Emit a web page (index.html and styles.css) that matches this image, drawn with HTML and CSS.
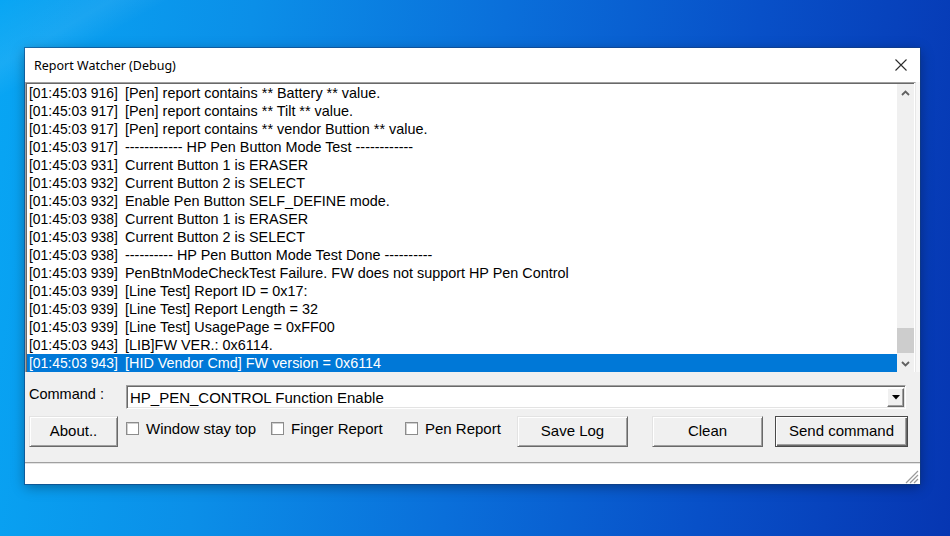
FILE: index.html
```html
<!DOCTYPE html>
<html>
<head>
<meta charset="utf-8">
<link rel="stylesheet" href="styles.css">
</head>
<body>
<div class="desktop">
  <div class="window">
    <div class="titlebar">
      <span class="title">Report Watcher (Debug)</span>
      <svg class="close" width="12" height="12" viewBox="0 0 12 12"><path d="M0.5 0.5 L11.5 11.5 M11.5 0.5 L0.5 11.5" stroke="#2b2b2b" stroke-width="1.1" fill="none"/></svg>
    </div>
    <div class="listwrap">
      <div class="listbox">
        <div class="rows">
          <div class="row"><span class="ts">[01:45:03 916]</span>[Pen] report contains ** Battery ** value.</div>
          <div class="row"><span class="ts">[01:45:03 917]</span>[Pen] report contains ** Tilt ** value.</div>
          <div class="row"><span class="ts">[01:45:03 917]</span>[Pen] report contains ** vendor Buttion ** value.</div>
          <div class="row"><span class="ts">[01:45:03 917]</span>------------ HP Pen Button Mode Test ------------</div>
          <div class="row"><span class="ts">[01:45:03 931]</span>Current Button 1 is ERASER</div>
          <div class="row"><span class="ts">[01:45:03 932]</span>Current Button 2 is SELECT</div>
          <div class="row"><span class="ts">[01:45:03 932]</span>Enable Pen Button SELF_DEFINE mode.</div>
          <div class="row"><span class="ts">[01:45:03 938]</span>Current Button 1 is ERASER</div>
          <div class="row"><span class="ts">[01:45:03 938]</span>Current Button 2 is SELECT</div>
          <div class="row"><span class="ts">[01:45:03 938]</span>---------- HP Pen Button Mode Test Done ----------</div>
          <div class="row"><span class="ts">[01:45:03 939]</span>PenBtnModeCheckTest Failure. FW does not support HP Pen Control</div>
          <div class="row"><span class="ts">[01:45:03 939]</span>[Line Test] Report ID = 0x17:</div>
          <div class="row"><span class="ts">[01:45:03 939]</span>[Line Test] Report Length = 32</div>
          <div class="row"><span class="ts">[01:45:03 939]</span>[Line Test] UsagePage = 0xFF00</div>
          <div class="row"><span class="ts">[01:45:03 943]</span>[LIB]FW VER.: 0x6114.</div>
          <div class="row selected"><span class="ts">[01:45:03 943]</span>[HID Vendor Cmd] FW version = 0x6114</div>
        </div>
        <div class="vscroll">
          <div class="sbtn"><svg width="9" height="6" viewBox="0 0 9 6"><path d="M1 5 L4.5 1.5 L8 5" stroke="#606060" stroke-width="1.8" fill="none"/></svg></div>
          <div class="track"><div class="thumb"></div></div>
          <div class="sbtn"><svg width="9" height="6" viewBox="0 0 9 6"><path d="M1 1 L4.5 4.5 L8 1" stroke="#606060" stroke-width="1.8" fill="none"/></svg></div>
        </div>
      </div>
    </div>
    <div class="panel">
      <div class="cmdrow">
        <span class="cmdlabel">Command :</span>
        <div class="combo">
          <span class="combotext">HP_PEN_CONTROL Function Enable</span>
          <div class="ddbtn"><svg width="8" height="5" viewBox="0 0 8 5"><path d="M0 0 L8 0 L4 4.5 Z" fill="#000"/></svg></div>
        </div>
      </div>
      <div class="btnrow">
        <div class="btn about">About..</div>
        <div class="check c1"><span class="box"></span><span class="clabel">Window stay top</span></div>
        <div class="check c2"><span class="box"></span><span class="clabel">Finger Report</span></div>
        <div class="check c3"><span class="box"></span><span class="clabel">Pen Report</span></div>
        <div class="btn savelog">Save Log</div>
        <div class="btn clean">Clean</div>
        <div class="btn send">Send command</div>
      </div>
    </div>
    <div class="statusbar">
      <svg class="grip" width="16" height="16" viewBox="0 0 16 16"><path d="M15 3 L3 15 M15 7 L7 15 M15 11 L11 15" stroke="#9a9a9a" stroke-width="1.2" fill="none"/></svg>
    </div>
  </div>
</div>
</body>
</html>
```

FILE: styles.css
```css
html, body {
  margin: 0;
  padding: 0;
}
body {
  width: 950px;
  height: 536px;
  overflow: hidden;
  font-family: "Liberation Sans", Arial, sans-serif;
  color: #000;
}
.desktop {
  width: 950px;
  height: 536px;
  padding-top: 48px;
  padding-left: 25px;
  box-sizing: border-box;
  background:
    linear-gradient(150deg, rgba(255,255,255,0) 0%, rgba(255,255,255,0.07) 6%, rgba(255,255,255,0) 9%),
    linear-gradient(97deg, #08a6f4 0%, #0b8fe8 25%, #0a6fda 50%, #0850c8 75%, #0636b2 100%);
}
.window {
  width: 895px;
  height: 436px;
  background: #fff;
  display: flex;
  flex-direction: column;
  box-shadow: 0 0 0 1px rgba(20,60,120,0.55), 0 3px 12px rgba(0,0,0,0.35);
}
.titlebar {
  height: 34px;
  display: flex;
  align-items: center;
  justify-content: space-between;
  padding: 0 13px 0 9px;
  background: #fff;
  flex: none;
}
.title {
  font-family: "Noto Sans", "Open Sans", sans-serif;
  font-size: 12.5px;
  color: #000;
  padding-top: 1px;
}
.close {
  display: block;
}
.listwrap {
  height: 290px;
  flex: none;
  background: #f7f7f7;
}
.listbox {
  width: 891px;
  height: 290px;
  box-sizing: border-box;
  border-top: 1px solid #a0a0a0;
  border-left: 1px solid #a0a0a0;
  border-right: 1px solid #e8e8e8;
  display: flex;
  background: #fff;
}
.rows {
  flex: 1;
  border-top: 1px solid #696969;
  border-left: 1px solid #696969;
}
.row {
  height: 18px;
  line-height: 18px;
  font-size: 14.4px;
  padding-left: 2px;
  white-space: nowrap;
}
.row.selected {
  background: #0078d7;
  color: #fff;
}
.ts {
  display: inline-block;
  width: 96px;
  font-size: 13.9px;
}
.vscroll {
  width: 17px;
  flex: none;
  background: #f0f0f0;
  border-top: 1px solid #696969;
  display: flex;
  flex-direction: column;
  margin-right: 1px;
}
.sbtn {
  height: 17px;
  display: flex;
  align-items: center;
  justify-content: center;
  flex: none;
}
.track {
  flex: 1;
  position: relative;
}
.thumb {
  position: absolute;
  left: 0;
  right: 0;
  bottom: 2px;
  height: 25px;
  background: #cdcdcd;
}
.panel {
  height: 90px;
  flex: none;
  background: #f0f0f0;
  padding: 13px 0 0 4px;
  box-sizing: border-box;
}
.cmdrow {
  display: flex;
  align-items: center;
  height: 24px;
}
.cmdlabel {
  width: 97px;
  font-size: 14.5px;
  margin-top: -7px;
}
.combo {
  width: 780px;
  height: 24px;
  box-sizing: border-box;
  background: #fff;
  border: 1px solid;
  border-color: #a0a0a0 #fff #fff #a0a0a0;
  box-shadow: inset 1px 1px 0 #696969, inset -1px -1px 0 #e3e3e3;
  display: flex;
  align-items: center;
  justify-content: space-between;
  padding: 0 1px 0 3px;
}
.combotext {
  font-size: 15px;
  padding-top: 1px;
}
.ddbtn {
  width: 17px;
  height: 19px;
  box-sizing: border-box;
  background: #f0f0f0;
  border: 1px solid;
  border-color: #fff #696969 #696969 #fff;
  box-shadow: inset -1px -1px 0 #a0a0a0;
  display: flex;
  align-items: center;
  justify-content: center;
}
.btnrow {
  display: flex;
  align-items: center;
  margin-top: 7px;
  height: 31px;
}
.btn {
  height: 31px;
  box-sizing: border-box;
  background: #f0f0f0;
  border: 1px solid;
  border-color: #e3e3e3 #696969 #696969 #e3e3e3;
  box-shadow: inset 1px 1px 0 #fff, inset -1px -1px 0 #a0a0a0;
  font-size: 15px;
  display: flex;
  align-items: center;
  justify-content: center;
  padding-bottom: 2px;
  flex: none;
}
.about {
  width: 89px;
}
.savelog {
  width: 111px;
}
.clean {
  width: 111px;
  margin-left: 24px;
}
.send {
  width: 133px;
  margin-left: 12px;
  border-color: #4a4a4a;
  box-shadow: inset 1px 1px 0 #fff, inset -1px -1px 0 #696969, inset -2px -2px 0 #a0a0a0;
}
.check {
  display: flex;
  align-items: center;
  font-size: 15px;
  flex: none;
  margin-top: -6px;
}
.c1 { width: 145px; margin-left: 8px; }
.c2 { width: 134px; }
.c3 { width: 112px; }
.box {
  width: 13px;
  height: 13px;
  box-sizing: border-box;
  background: #fff;
  border: 1px solid #8c8c8c;
  box-shadow: inset 1px 1px 0 #d0d0d0;
  margin-right: 7px;
}
.statusbar {
  flex: 1;
  background: #fff;
  border-top: 1px solid #a0a0a0;
  box-shadow: inset 0 1px 0 #e3e3e3;
  display: flex;
  justify-content: flex-end;
  align-items: flex-end;
}
.grip {
  display: block;
  margin-right: 1px;
}
```
